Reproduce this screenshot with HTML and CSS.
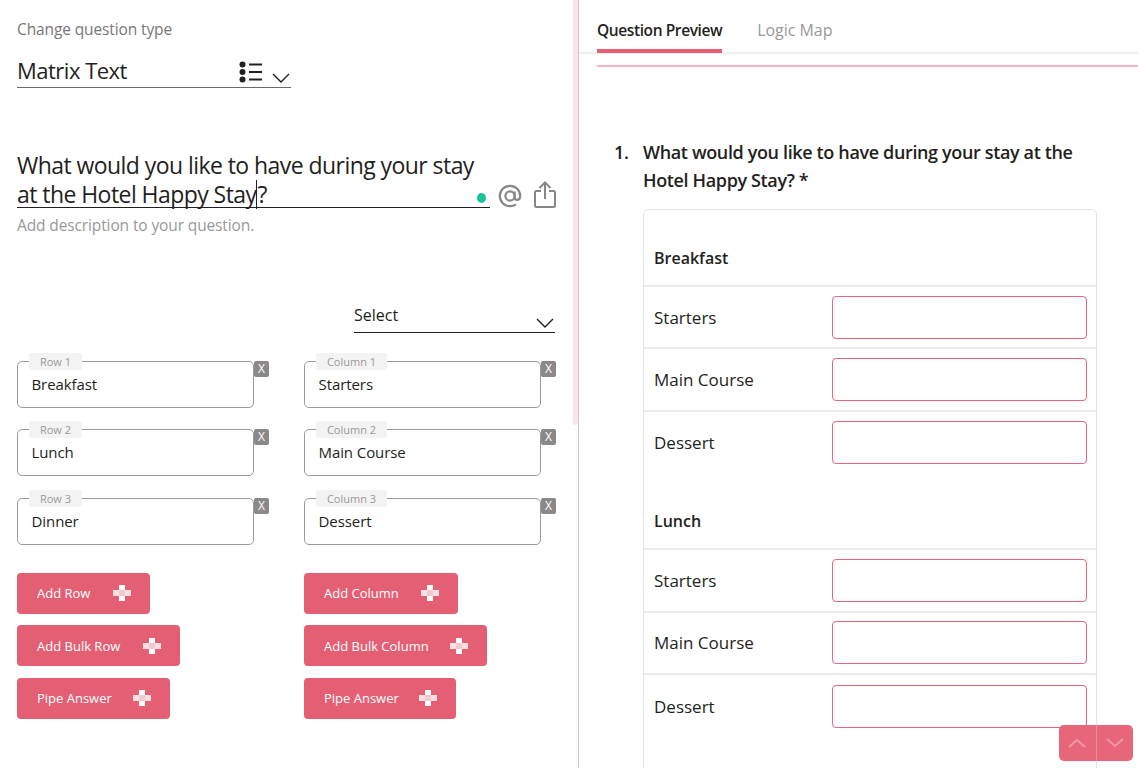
FILE: index.html
```html
<!DOCTYPE html>
<html lang="en">
<head>
    <meta charset="UTF-8">
    <meta name="viewport" content="width=device-width, initial-scale=1.0">
    <title>Question Editor</title>
    <link rel="stylesheet" href="styles.css">
</head>
<body>
    <div class="page">
        <div class="editor">
            <div class="type-label">Change question type</div>
            <div class="type-select">
                <span class="type-name">Matrix Text</span>
                <svg class="type-list" width="24" height="22" viewBox="0 0 24 22">
                    <circle cx="3.5" cy="3.5" r="3" fill="#231f20"/>
                    <circle cx="3.5" cy="11" r="3" fill="#231f20"/>
                    <circle cx="3.5" cy="18.5" r="3" fill="#231f20"/>
                    <path d="M10 3.5h13M10 11h13M10 18.5h13" stroke="#231f20" stroke-width="2" fill="none"/>
                </svg>
                <svg class="type-chevron" width="18" height="10" viewBox="0 0 18 10">
                    <path d="M1 1l8 8 8-8" stroke="#231f20" stroke-width="1.4" fill="none"/>
                </svg>
            </div>

            <div class="question-row">
                <div class="question-field">
                    What would you like to have during your stay<br>at the Hotel Happy Stay<span class="caret"></span>?
                    <span class="status-dot"></span>
                </div>
                <svg class="at-icon" width="24" height="24" viewBox="0 0 24 24">
                    <circle cx="12" cy="12" r="4.6" stroke="#8a8687" stroke-width="2.2" fill="none"/>
                    <path d="M16.6 7.4v6.2c0 3.2 5.6 3.2 5.6-1.6C22.200 6.400 17.600 1.800 12 1.800S1.800 6.400 1.800 12 6.400 22.200 12 22.200c2.300 0 4.200-.6 6-1.800" stroke="#8a8687" stroke-width="2.2" fill="none"/>
                </svg>
                <svg class="share-icon" width="22" height="28" viewBox="0 0 22 28">
                    <path d="M7 10H2.500a1.500 1.500 0 0 0-1.500 1.500v13A1.500 1.500 0 0 0 2.500 26h17a1.500 1.500 0 0 0 1.500-1.500v-13A1.500 1.500 0 0 0 19.500 10H15M11 18V1.500M5.500 7L11 1.500 16.500 7" stroke="#8a8687" stroke-width="2" fill="none"/>
                </svg>
            </div>
            <div class="description">Add description to your question.</div>

            <div class="select-wrap">
                <div class="plain-select">
                    <span>Select</span>
                    <svg width="18" height="10" viewBox="0 0 18 10">
                        <path d="M1 1l8 8 8-8" stroke="#231f20" stroke-width="1.4" fill="none"/>
                    </svg>
                </div>
            </div>

            <div class="fields">
                <div class="field"><span class="chip chip-row">Row 1</span>Breakfast<span class="remove">X</span></div>
                <div class="field"><span class="chip chip-col">Column 1</span>Starters<span class="remove">X</span></div>
                <div class="field"><span class="chip chip-row">Row 2</span>Lunch<span class="remove">X</span></div>
                <div class="field"><span class="chip chip-col">Column 2</span>Main Course<span class="remove">X</span></div>
                <div class="field"><span class="chip chip-row">Row 3</span>Dinner<span class="remove">X</span></div>
                <div class="field"><span class="chip chip-col">Column 3</span>Dessert<span class="remove">X</span></div>
            </div>

            <div class="actions">
                <button class="add-btn add-row">Add Row<span class="plus"></span></button>
                <button class="add-btn add-col">Add Column<span class="plus"></span></button>
                <button class="add-btn add-bulk-row">Add Bulk Row<span class="plus"></span></button>
                <button class="add-btn add-bulk-col">Add Bulk Column<span class="plus"></span></button>
                <button class="add-btn add-pipe-row">Pipe Answer<span class="plus"></span></button>
                <button class="add-btn add-pipe-col">Pipe Answer<span class="plus"></span></button>
            </div>
        </div>

        <div class="scroll-track"><div class="scroll-thumb"></div></div>

        <div class="preview">
            <div class="tabs">
                <div class="tab active">Question Preview</div>
                <div class="tab">Logic Map</div>
            </div>
            <div class="pink-line"></div>

            <div class="question">
                <span class="question-num">1.</span>
                <span class="question-text">What would you like to have during your stay at the Hotel Happy Stay? *</span>
            </div>

            <div class="matrix">
                <div class="matrix-head first">Breakfast</div>
                <div class="matrix-row"><span>Starters</span><div class="answer"></div></div>
                <div class="matrix-row"><span>Main Course</span><div class="answer"></div></div>
                <div class="matrix-row no-line"><span>Dessert</span><div class="answer"></div></div>
                <div class="matrix-head">Lunch</div>
                <div class="matrix-row"><span>Starters</span><div class="answer"></div></div>
                <div class="matrix-row"><span>Main Course</span><div class="answer"></div></div>
                <div class="matrix-row no-line"><span>Dessert</span><div class="answer"></div></div>
                <div class="matrix-head"></div>
            </div>
        </div>
    </div>

    <div class="pager">
        <div class="pager-btn">
            <svg width="18" height="10" viewBox="0 0 18 10"><path d="M1 9l8-7 8 7" stroke="#f097a6" stroke-width="2" fill="none"/></svg>
        </div>
        <div class="pager-btn">
            <svg width="18" height="10" viewBox="0 0 18 10"><path d="M1 1l8 7 8-7" stroke="#f097a6" stroke-width="2" fill="none"/></svg>
        </div>
    </div>
</body>
</html>
```

FILE: styles.css
```css
* {
    box-sizing: border-box;
}

body {
    margin: 0;
    height: 768px;
    overflow: hidden;
    background-color: #fff;
    color: #231f20;
    font-family: "Open Sans", "Noto Sans", sans-serif;
}

.page {
    display: flex;
    height: 768px;
}

/* left side */
.editor {
    width: 573px;
    padding: 19px 0 0 17px;
    flex-shrink: 0;
}

.type-label {
    font-size: 15.500px;
    line-height: 20px;
    color: #777;
    letter-spacing: -0.12px;
}

.type-select {
    display: flex;
    align-items: center;
    width: 274px;
    height: 38px;
    margin-top: 11px;
    border-bottom: 1px solid #6d6a6b;
}

.type-name {
    flex: 1;
    margin-top: 2px;
    font-size: 22px;
    letter-spacing: -0.5px;
}

.type-list {
    margin-top: 6px;
    margin-right: 9px;
}

.type-chevron {
    margin-top: 19px;
    margin-right: 1px;
}

.question-row {
    display: flex;
    align-items: flex-end;
    margin-top: 62px;
}

.question-field {
    position: relative;
    width: 473px;
    height: 58px;
    padding-top: 1px;
    font-size: 23px;
    line-height: 29px;
    letter-spacing: -0.56px;
    border-bottom: 1px solid #231f20;
}

.caret {
    display: inline-block;
    width: 0;
    height: 29px;
    border-left: 1px solid #231f20;
    vertical-align: top;
}

.status-dot {
    position: absolute;
    right: 4px;
    bottom: 4px;
    width: 9px;
    height: 10px;
    border-radius: 50%;
    background-color: #1cc29a;
}

.at-icon {
    margin-left: 8px;
}

.share-icon {
    margin-left: 12px;
    margin-bottom: -1px;
}

.description {
    margin-top: 7px;
    font-size: 15.500px;
    line-height: 20px;
    color: #999;
    letter-spacing: -0.12px;
}

.select-wrap {
    display: flex;
    justify-content: flex-end;
    width: 538px;
    margin-top: 69px;
}

.plain-select {
    display: flex;
    justify-content: space-between;
    width: 201px;
    height: 29px;
    font-size: 16px;
    line-height: 22px;
    border-bottom: 1px solid #231f20;
}

.plain-select svg {
    margin-top: 14px;
    margin-right: 1px;
}

.fields {
    display: grid;
    grid-template-columns: 237px 237px;
    column-gap: 50px;
    row-gap: 21.5px;
    margin-top: 27.900px;
}

.field {
    position: relative;
    height: 47px;
    padding: 11px 13.500px;
    font-size: 15px;
    line-height: 22px;
    letter-spacing: -0.08px;
    border: 1px solid #9c9a9a;
    border-radius: 5px;
}

.chip {
    position: absolute;
    top: -9px;
    left: 11px;
    height: 17px;
    font-size: 11px;
    line-height: 17px;
    letter-spacing: 0;
    text-align: center;
    color: #999;
    background-color: #f3f3f3;
    border-radius: 2px;
}

.chip-row {
    width: 53px;
}

.chip-col {
    width: 71px;
}

.remove {
    position: absolute;
    top: -1px;
    left: 236px;
    width: 15px;
    height: 16px;
    font-size: 12px;
    line-height: 16px;
    text-align: center;
    color: #fff;
    background-color: #8c8788;
    border-radius: 2px;
}

.actions {
    display: grid;
    grid-template-columns: 287px 1fr;
    row-gap: 11.5px;
    justify-items: start;
    margin-top: 28.100px;
}

.add-btn {
    display: flex;
    align-items: center;
    justify-content: space-between;
    height: 41px;
    padding: 0 19px 0 20px;
    font-family: inherit;
    font-size: 13px;
    color: #fff;
    background-color: #e55f74;
    border: none;
    border-radius: 4px;
}

.add-row { width: 133px; }
.add-col { width: 154px; }
.add-bulk-row { width: 163px; }
.add-bulk-col { width: 183px; }
.add-pipe-row { width: 153px; }
.add-pipe-col { width: 152px; }

.plus {
    position: relative;
    width: 18px;
    height: 16px;
    background:
        linear-gradient(#fff, #fff) 6px 0 / 6px 5px no-repeat,
        linear-gradient(#f3c9d0, #f3c9d0) 6px 5px / 6px 6px no-repeat,
        linear-gradient(#fff, #fff) 6px 11px / 6px 5px no-repeat,
        linear-gradient(#f7dfe3, #f7dfe3) 0 5px / 18px 6px no-repeat;
}

/* custom scrollbar between the panes */
.scroll-track {
    width: 5px;
    flex-shrink: 0;
}

.scroll-thumb {
    height: 425px;
    background-color: #fde3e6;
    border-radius: 0 0 3px 3px;
}

/* right side */
.preview {
    flex: 1;
    min-width: 0;
    height: 768px;
    overflow: hidden;
    border-left: 1px solid #c9c9c9;
}

.tabs {
    display: flex;
    gap: 35px;
    height: 54px;
    padding: 0 0 0 18px;
    border-bottom: 2px solid #efefef;
}

.tab {
    height: 53px;
    padding-top: 19px;
    font-size: 16px;
    line-height: 22px;
    letter-spacing: -0.05px;
    color: #999;
}

.tab.active {
    color: #231f20;
    font-size: 15.500px;
    font-weight: 600;
    letter-spacing: -0.4px;
    border-bottom: 4px solid #e55f74;
}

.pink-line {
    height: 2px;
    margin: 11px 0 0 18px;
    background-color: #f6b4c0;
}

.question {
    display: flex;
    margin: 70.500px 0 0 35px;
    font-size: 18px;
    font-weight: 600;
    line-height: 28px;
    letter-spacing: -0.36px;
}

.question-num {
    width: 29px;
    flex-shrink: 0;
}

.question-text {
    width: 440px;
}

.matrix {
    width: 454px;
    margin: 15.500px 0 0 64px;
    border: 1px solid #e3e3e3;
    border-radius: 5px;
}

.matrix-head {
    height: 76px;
    padding: 35px 10px 0;
    font-size: 16px;
    font-weight: 600;
    line-height: 24px;
    border-bottom: 2px solid #ebebeb;
}

.matrix-head.first {
    height: 77px;
    padding-top: 36px;
}

.matrix-row {
    display: flex;
    align-items: center;
    justify-content: space-between;
    height: 62.400px;
    padding: 0 9px 0 10px;
    font-size: 17px;
    border-bottom: 2px solid #ebebeb;
}

.matrix-row.no-line {
    border-bottom: none;
}

.answer {
    width: 255px;
    height: 43px;
    border: 1px solid #e8667a;
    border-radius: 4px;
}

.pager {
    position: fixed;
    left: 1059px;
    top: 725px;
    display: flex;
    width: 74px;
    height: 36px;
    background-color: #e8667a;
    border-radius: 5px;
}

.pager-btn {
    display: flex;
    align-items: center;
    justify-content: center;
    flex: 1;
}

.pager-btn + .pager-btn {
    border-left: 1px solid #ee8c9b;
}
```
